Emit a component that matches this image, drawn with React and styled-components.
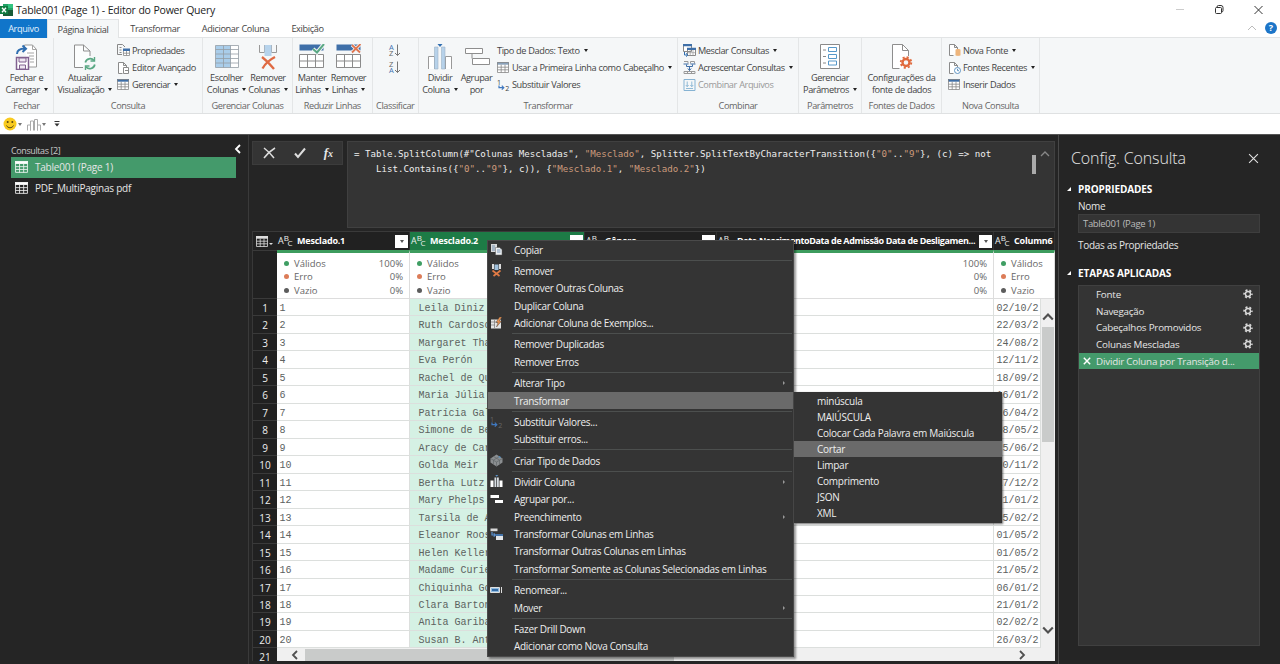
import styled, { createGlobalStyle } from 'styled-components';

const columns = [
    { name: 'Mesclado.1', width: 133 },
    { name: 'Mesclado.2', width: 175, selected: true },
    { name: 'Gênero', width: 132 },
    { name: 'Data NascimentoData de Admissão Data de Desligamen...', width: 277, tight: true },
    { name: 'Column6', width: 61, last: true },
];

const people = [
    ['Leila Diniz', '02/10/2'],
    ['Ruth Cardoso', '22/03/2'],
    ['Margaret Thatcher', '24/08/2'],
    ['Eva Perón', '12/11/2'],
    ['Rachel de Queiroz', '18/09/2'],
    ['Maria Júlia', '16/01/2'],
    ['Patrícia Galvão', '26/04/2'],
    ['Simone de Beauvoir', '08/05/2'],
    ['Aracy de Carvalho', '25/06/2'],
    ['Golda Meir', '30/11/2'],
    ['Bertha Lutz', '17/12/2'],
    ['Mary Phelps', '21/01/2'],
    ['Tarsila de Amaral', '05/02/2'],
    ['Eleanor Roosevelt', '01/05/2'],
    ['Helen Keller', '01/05/2'],
    ['Madame Curie', '21/05/2'],
    ['Chiquinha Gonzaga', '06/01/2'],
    ['Clara Barton', '21/01/2'],
    ['Anita Garibaldi', '02/02/2'],
    ['Susan B. Anthony', '26/03/2'],
];

const steps = ['Fonte', 'Navegação', 'Cabeçalhos Promovidos', 'Colunas Mescladas'];
const transforms = ['minúscula', 'MAIÚSCULA', 'Colocar Cada Palavra em Maiúscula', 'Cortar', 'Limpar', 'Comprimento', 'JSON', 'XML'];

/* ---------- icons ---------- */
const ExcelIcon = () => (
    <svg width="13" height="12" viewBox="0 0 13 12">
        <path d="M3 0h10v12H3z" fill="#21a366" />
        <path d="M8 0h5v4H8z" fill="#33c481" />
        <path d="M3 6h10v6H3z" fill="#185c37" />
        <path d="M0 2h8v8H0z" fill="#107c41" />
        <path d="M2 3.7l4 4.6M6 3.7L2 8.3" stroke="#fff" strokeWidth="1.3" />
    </svg>
);

const CloseLoadIcon = () => (
    <svg width="24" height="26" viewBox="0 0 24 26" fill="none">
        <path d="M9.500 5V1h8l4 4.500V23H14" fill="#fff" stroke="#9a9a9a" />
        <path d="M17.500 1v4.500h4M12 9h7M14 12h5M15 15h4M15 18h4" stroke="#a5a5a5" />
        <path d="M2 10c0-4 3-5.500 8-5.500M7.500 1.500L11 4.700 7.500 8" stroke="#2f6eb0" strokeWidth="2" />
        <path d="M1.500 13.500h12v12h-12z" fill="#fff" stroke="#80608f" strokeWidth="1.500" />
        <path d="M4 14h7v4H4zM4.500 21h6v4h-6z" fill="#eee6f1" stroke="#80608f" />
    </svg>
);

const RefreshIcon = () => (
    <svg width="24" height="26" viewBox="0 0 24 26" fill="none">
        <path d="M1.500 1h9l6.500 6v5L10 23.500H1.500z" fill="#fff" opacity=".7" />
        <path d="M1.500 1h9l6.500 6v5M10 23.500H1.500V1M10.500 1v6H17" stroke="#8e8e8e" />
        <path d="M12.300 18.500a5 5 0 0 1 8.700-2M21.800 20.500a5 5 0 0 1-8.800 2.300" stroke="#5aa884" strokeWidth="1.700" />
        <path d="M21.500 13v4h-4M12.500 26v-4h4" stroke="#5aa884" strokeWidth="1.400" />
    </svg>
);

const ChooseColsIcon = () => (
    <svg width="24" height="26" viewBox="0 0 24 26">
        <path d="M.5 1.500h23v22H.5z" fill="#fff" />
        <path d="M.5 1.500h15v22H.5z" fill="#a9cdea" />
        <path d="M.5 1.500h23v22H.5zM8.500 1.500v22M15.500 1.500v22M.5 5.500h23M.5 10h23M.5 14.500h23M.5 19h23" fill="none" stroke="#949da5" strokeWidth=".8" />
    </svg>
);

const RemoveColsIcon = () => (
    <svg width="22" height="26" viewBox="0 0 22 26" fill="none">
        <path d="M2.500 1v7.500h5V1M14.500 1v7.500h5V1" stroke="#999" />
        <path d="M7.500 1h7v11h-7z" fill="#b6d3ec" />
        <path d="M5 13c4 3 8 7 12 12M18 13C12 16 8 20 5.500 24.500" stroke="#df6a43" strokeWidth="2.300" />
    </svg>
);

const RowsIcon = ({ remove }) => (
    <svg width="26" height="26" viewBox="0 0 26 26" fill="none">
        <path d="M.5.500h24v6H.5z" fill="#3e6fa8" />
        <path d="M.5 10.500h24v13H.5zM.5 17h24M8.500 10.500v13M16.500 10.500v13" fill="#fff" stroke="#8b8b8b" />
        {remove
            ? <path d="M16 1l8 7.500M24.500 0L16 8.500" stroke="#f4f6f7" strokeWidth="3.500" />
            : <path d="M14 5l4 3.500L25 0" stroke="#f4f6f7" strokeWidth="4" />}
        {remove
            ? <path d="M16 1l8 7.500M24.500 0L16 8.500" stroke="#df7550" strokeWidth="1.800" />
            : <path d="M14 5l4 3.500L25 0" stroke="#5aa884" strokeWidth="2" />}
    </svg>
);

const SortIcon = ({ desc }) => (
    <svg width="14" height="14" viewBox="0 0 14 14">
        <text x="1" y="6.500" fontSize="7.500" fontFamily="Open Sans" fill={desc ? '#666' : '#3f73b0'}>{desc ? 'Z' : 'A'}</text>
        <text x="1" y="13" fontSize="7.500" fontFamily="Open Sans" fill={desc ? '#3f73b0' : '#666'}>{desc ? 'A' : 'Z'}</text>
        <path d="M9.500 1.500v11M7 10l2.500 2.500L12 10" fill="none" stroke="#777" />
    </svg>
);

const SplitColIcon = () => (
    <svg width="26" height="26" viewBox="0 0 26 26" fill="none">
        <path d="M1.500 25V12.500h6V25M18.500 25V12.500h6V25" stroke="#999" fill="#fff" />
        <path d="M7.500 3h3.500v22H7.500zM14.500 3H18v22h-3.500z" fill="#b7d2ea" stroke="#9eb4c6" strokeWidth=".6" />
        <path d="M10.500 0h5L13 3z" fill="#2f6eb0" />
    </svg>
);

const GroupByIcon = () => (
    <svg width="26" height="26" viewBox="0 0 26 26" fill="none">
        <path d="M1.500 4.500h17v5h-17zM8.500 14.500h17v6h-17zM8 9.500v5" stroke="#8e8e8e" fill="#fff" />
    </svg>
);

const ParamsIcon = () => (
    <svg width="20" height="26" viewBox="0 0 20 26" fill="none">
        <path d="M.5.500h19v24H.5z" stroke="#8a8a8a" fill="#fff" />
        <path d="M3 6h3M3 12.500h3M3 19h3" stroke="#8a8a8a" />
        <path d="M8.500 3.500h8v4h-8zM8.500 10.500h8v4h-8zM8.500 17h8v4h-8z" stroke="#5698c9" />
    </svg>
);

const SourceGearIcon = () => (
    <svg width="24" height="26" viewBox="0 0 24 26" fill="none">
        <path d="M2.500.500h10l6 6V24.500h-16z" fill="#fff" />
        <path d="M9.500 24.500h-7V.500h10l6 6V12M12.500.500v6h6" stroke="#8e8e8e" />
        <circle cx="16" cy="18.500" r="3.500" fill="#f5f6f7" stroke="#e0693c" strokeWidth="2.400" />
        <circle cx="16" cy="18.500" r="5.300" stroke="#e0693c" strokeWidth="1.800" strokeDasharray="2.100 2.060" />
    </svg>
);

const TableIcon = ({ head = '#3e6fa8', size = 12, line = '#888', fill = '#fff' }) => (
    <svg width={size} height={size * 11 / 12} viewBox="0 0 12 11">
        <path d="M.5.500h11v10H.5z" fill={fill} />
        <path d="M0 0h12v2.700H0z" fill={head} />
        <path d="M.5.500h11v10H.5zM.5 5.200h11M.5 7.800h11M4.200 2.700v8M8 2.700v8" fill="none" stroke={line} strokeWidth=".8" />
    </svg>
);

const PropsIcon = () => (
    <svg width="13" height="12" viewBox="0 0 13 12" fill="none">
        <path d="M5 10.500H.5V.500h5l2.500 2.500M2.500 3.500h2M2.500 6h2M2.500 8.500h2" stroke="#888" />
        <path d="M6 5h7v6.500H6z" fill="#fff" />
        <path d="M6 4.500h7V7H6z" fill="#3e6fa8" />
        <path d="M6.500 7v4.500h6V7M6.500 9.200h6M9.500 7v4.500" stroke="#888" strokeWidth=".8" />
    </svg>
);

const DocIcon = ({ kind }) => (
    <svg width="13" height="12" viewBox="0 0 13 12" fill="none">
        <path d="M5.500 11.500h-4V.500h5l3 3V5M6.500.500v3h3" stroke="#8b8b8b" fill="#fff" />
        {kind === 'edit' && <path d="M6.500 5.500h5v6h-5zM8 8.500h3.500" stroke="#8b8b8b" fill="#fff" />}
        {kind === 'new' && <path d="M7.500 6c0-1.300 5-1.300 5 0v5c0 1.200-5 1.200-5 0z" fill="#eeb57c" />}
        {kind === 'recent' && <><circle cx="9.500" cy="8.500" r="3" stroke="#5f93c2" fill="#fff" /><path d="M9.500 6.800v1.900h1.500" stroke="#5f93c2" /></>}
    </svg>
);

const ReplaceIcon = ({ dark }) => (
    <svg width="13" height="12" viewBox="0 0 13 12" fill="none">
        <text x="0" y="6" fontSize="7" fontFamily="Open Sans" fill={dark ? '#676767' : '#444'}>1</text>
        <text x="8.300" y="11.500" fontSize="7" fontFamily="Open Sans" fill={dark ? '#676767' : '#444'}>2</text>
        <path d="M2 6.500v2.200h4.500M4.800 6.700l2 2-2 2" stroke="#4079c0" strokeWidth="1.200" />
    </svg>
);

const MergeIcon = () => (
    <svg width="13" height="13" viewBox="0 0 13 13" fill="none">
        <path d="M.5.500h8v7h-8zM4.500 4.500h8v7h-8z" fill="#fff" stroke="#888" />
        <path d="M0 0h9v2.200H0zM4 3.800h9V6H4z" fill="#3e6fa8" />
        <path d="M7.200 6v5.500M10 6v5.500M4.500 8.700h8" stroke="#999" strokeWidth=".7" />
        <path d="M1.500 8v3h3M3 9.300L4.800 11 3 12.700" stroke="#2f6eb0" />
    </svg>
);

const AppendIcon = () => (
    <svg width="13" height="13" viewBox="0 0 13 13" fill="none">
        <path d="M1 .500h4v2M7.500 2.500v-2h4v2M1 10.500h11v2H1zM4.500 10.500v2M8.500 10.500v2" stroke="#999" />
        <path d="M.5 3h5M7.500 3h5" stroke="#3e6fa8" />
        <path d="M3.500 3.500v2h6v-2M6.500 5.500v4M4.800 7.500l1.700 2 1.700-2" stroke="#3e6fa8" />
    </svg>
);

const CombineIcon = () => (
    <svg width="13" height="12" viewBox="0 0 13 12" fill="none" stroke="#86b3d3">
        <path d="M1 .500h11v11H1z" />
        <path d="M4.200 2.500v5M2.800 6l1.400 1.700L5.600 6M8.800 2.500v5M7.400 6l1.400 1.700L10.200 6M3 9.500h7" strokeWidth=".9" />
    </svg>
);

const MenuIcon = ({ kind }) => {
    const art = {
        copy: <><path d="M1 1h6v8H1z" fill="#d6d8da" /><path d="M5.500 4.500h4l2.500 2V12H5.500z" fill="#eceff2" stroke="#555" strokeWidth=".5" /><path d="M2 3h3M2 5h3M2 7h3M7 7h3.500M7 9h3.500" stroke="#5d80a5" strokeWidth=".8" /></>,
        remove: <><path d="M2 0h2v5H2zM9 0h2v5H9z" fill="#ddd" /><path d="M4.500.500h4V6h-4z" fill="#9fc0dc" /><path d="M2.500 6.500l7 5.500M10.500 6.500l-7 5.500" stroke="#df7a45" strokeWidth="1.700" /></>,
        example: <><path d="M1 2.500h10v9H1z" fill="#e4e4e4" /><path d="M1 5h10M4.500 3v8M1 8h4" stroke="#777" strokeWidth=".7" /><path d="M9.500 0L6 5.500h2L6.500 10l5-6H9.300L12 0z" fill="#e79252" stroke="#333" strokeWidth=".4" /></>,
        type: <><path d="M6.500.500l6 4v4l-6 4-6-4v-4z" fill="#8b8e90" /><path d="M.5 4.500l6 3.500 6-3.500M6.500 8v4.500M3.500 2.500l6 3.500v4M9.500 2.500l-6 3.500v4" stroke="#62676a" strokeWidth=".7" /><path d="M8 3l2-1 1 2z" fill="#4d90c8" /></>,
        split: <><path d="M.5 5.500h3V12h-3zM9.500 5.500h3V12h-3z" fill="#fff" /><path d="M4.500 2.500h1.800V12H4.500zM7 2.500h1.800V12H7z" fill="#d7dde2" /><path d="M5.300 0h3L6.700 1.700z" fill="#5b91c6" /></>,
        group: <><path d="M.5 2h8.500v3H.5zM5 7h8v3H5z" fill="#fff" /></>,
        unpivot: <><path d="M.5.500h7v2.700h-7z" fill="#d9d9d9" /><path d="M6 7h7v5H6z" fill="#e2e5e8" /><path d="M6 6h7v2H6z" fill="#4473a8" /><path d="M2 4v3h3M3.700 5.300L5.400 7 3.700 8.700" stroke="#5b91d0" strokeWidth="1.200" /></>,
        rename: <><path d="M.5 3.500h9v5h-9z" fill="#8db9df" stroke="#e0e0e0" /><path d="M2 5h6v2H2z" fill="#356ca6" /><path d="M11.500 3v6" stroke="#ddd" /></>,
    };
    if (kind === 'replace') return <ReplaceIcon dark />;
    return <svg width="13" height="13" viewBox="0 0 13 13" fill="none">{art[kind]}</svg>;
};

const Chevron = ({ d, size = 10, color = '#505050', weight = 1.8 }) => (
    <svg width={size} height={size} viewBox="0 0 10 10"><path d={d} fill="none" stroke={color} strokeWidth={weight} /></svg>
);

const Gear = () => (
    <svg width="10" height="10" viewBox="0 0 10 10" fill="none" stroke="#d8d8d8">
        <circle cx="5" cy="5" r="2.500" strokeWidth="1.400" />
        <circle cx="5" cy="5" r="3.900" strokeWidth="1.600" strokeDasharray="2.040 2.040" strokeDashoffset="1.020" />
    </svg>
);

/* ---------- ribbon data ---------- */
const ribbon = [
    { label: 'Fechar', width: 54, big: [{ w: 53, icon: <CloseLoadIcon />, lines: ['Fechar e', 'Carregar'], menu: true }] },
    {
        label: 'Consulta', width: 149,
        big: [{ w: 62, icon: <RefreshIcon />, lines: ['Atualizar', 'Visualização'], menu: true }],
        small: [
            { icon: <PropsIcon />, text: 'Propriedades' },
            { icon: <DocIcon kind="edit" />, text: 'Editor Avançado' },
            { icon: <TableIcon />, text: 'Gerenciar', menu: true },
        ],
        gap: 1,
    },
    {
        label: 'Gerenciar Colunas', width: 90,
        big: [
            { w: 47, icon: <ChooseColsIcon />, lines: ['Escolher', 'Colunas'], menu: true },
            { w: 36, icon: <RemoveColsIcon />, lines: ['Remover', 'Colunas'], menu: true },
        ],
    },
    {
        label: 'Reduzir Linhas', width: 79.5,
        big: [
            { w: 38, icon: <RowsIcon />, lines: ['Manter', 'Linhas'], menu: true },
            { w: 35, icon: <RowsIcon remove />, lines: ['Remover', 'Linhas'], menu: true },
        ],
    },
    { label: 'Classificar', width: 46.5, sort: true },
    {
        label: 'Transformar', width: 259,
        big: [
            { w: 42, icon: <SplitColIcon />, lines: ['Dividir', 'Coluna'], menu: true },
            { w: 31, icon: <GroupByIcon />, lines: ['Agrupar', 'por'] },
        ],
        small: [
            { text: 'Tipo de Dados: Texto', menu: true },
            { icon: <TableIcon head="#8aa2bb" />, text: 'Usar a Primeira Linha como Cabeçalho', menu: true },
            { icon: <ReplaceIcon />, text: 'Substituir Valores' },
        ],
        gap: 5,
    },
    {
        label: 'Combinar', width: 121,
        small: [
            { icon: <MergeIcon />, text: 'Mesclar Consultas', menu: true },
            { icon: <AppendIcon />, text: 'Acrescentar Consultas', menu: true },
            { icon: <CombineIcon />, text: 'Combinar Arquivos', off: true },
        ],
        gap: 5,
    },
    { label: 'Parâmetros', width: 63, big: [{ w: 62, icon: <ParamsIcon />, lines: ['Gerenciar', 'Parâmetros'], menu: true }] },
    { label: 'Fontes de Dados', width: 80, big: [{ w: 79, icon: <SourceGearIcon />, lines: ['Configurações da', 'fonte de dados'] }] },
    {
        label: 'Nova Consulta', width: 98,
        small: [
            { icon: <DocIcon kind="new" />, text: 'Nova Fonte', menu: true },
            { icon: <DocIcon kind="recent" />, text: 'Fontes Recentes', menu: true },
            { icon: <TableIcon />, text: 'Inserir Dados' },
        ],
        gap: 6,
    },
];

const menuGroups = [
    [{ text: 'Copiar', icon: 'copy' }],
    [
        { text: 'Remover', icon: 'remove' },
        { text: 'Remover Outras Colunas' },
        { text: 'Duplicar Coluna' },
        { text: 'Adicionar Coluna de Exemplos...', icon: 'example' },
    ],
    [{ text: 'Remover Duplicadas' }, { text: 'Remover Erros' }],
    [{ text: 'Alterar Tipo', sub: true }, { text: 'Transformar', active: true }],
    [{ text: 'Substituir Valores...', icon: 'replace' }, { text: 'Substituir erros...' }],
    [{ text: 'Criar Tipo de Dados', icon: 'type' }],
    [
        { text: 'Dividir Coluna', icon: 'split', sub: true },
        { text: 'Agrupar por...', icon: 'group' },
        { text: 'Preenchimento', sub: true },
        { text: 'Transformar Colunas em Linhas', icon: 'unpivot' },
        { text: 'Transformar Outras Colunas em Linhas' },
        { text: 'Transformar Somente as Colunas Selecionadas em Linhas' },
    ],
    [{ text: 'Renomear...', icon: 'rename' }, { text: 'Mover', sub: true }],
    [{ text: 'Fazer Drill Down' }, { text: 'Adicionar como Nova Consulta' }],
];

const Ribbon = () => (
    <RibbonBar>
        {ribbon.map((group) => (
            <Group key={group.label} $w={group.width}>
                <div className="body">
                    {group.big?.map((item) => (
                        <BigButton key={item.lines.join()} $w={item.w}>
                            <span className="icon">{item.icon}</span>
                            <span>{item.lines[0]}</span>
                            <span>{item.lines[1]}{item.menu && <Caret />}</span>
                        </BigButton>
                    ))}
                    {group.small && (
                        <SmallList $gap={group.gap}>
                            {group.small.map((item) => (
                                <SmallButton key={item.text} $off={item.off}>
                                    {item.icon && <span className="icon">{item.icon}</span>}
                                    {item.text}{item.menu && <Caret />}
                                </SmallButton>
                            ))}
                        </SmallList>
                    )}
                    {group.sort && <SortList><SortIcon /><SortIcon desc /></SortList>}
                </div>
                <footer>{group.label}</footer>
            </Group>
        ))}
    </RibbonBar>
);

const TypeBadge = () => <Abc><span>A</span><sup>B</sup><sub>C</sub></Abc>;

const Grid = () => (
    <GridWrap>
        <HeaderRow>
            <Corner><TableIcon head="#ddd" line="#ddd" fill="none" /><i /></Corner>
            {columns.map((col) => (
                <HeadCell key={col.name} $w={col.width} $selected={col.selected} $tight={col.tight}>
                    <TypeBadge />
                    <b>{col.name}</b>
                    {!col.last && <Drop><Caret $color="#555" /></Drop>}
                </HeadCell>
            ))}
        </HeaderRow>
        <QualityRow>
            <RowNo />
            {columns.map((col) => (
                <Quality key={col.name} $w={col.width}>
                    <p><Dot $color="#3f9e63" />Válidos{!col.last && <em>100%</em>}</p>
                    <p><Dot $color="#dc7c58" />Erro{!col.last && <em>0%</em>}</p>
                    <p><Dot $color="#5c5c5c" />Vazio{!col.last && <em>0%</em>}</p>
                </Quality>
            ))}
        </QualityRow>
        <Body>
            <div className="numbers">
                {people.map((p, i) => <RowNo key={i}>{i + 1}</RowNo>)}
                <RowNo>21</RowNo>
            </div>
            <div className="scroller">
                <div className="data">
                    <div className="rows">
                        {people.map(([name, date], i) => (
                            <Row key={name}>
                                <Cell $w={133}>{i + 1}</Cell>
                                <Cell $w={175} $selected>{name}</Cell>
                                <Cell $w={132} />
                                <Cell $w={277} />
                                <Cell $w={47}>{date}</Cell>
                            </Row>
                        ))}
                    </div>
                    <VScroll>
                        <Chevron d="M1 7l4-4 4 4" size={12} />
                        <i />
                        <Chevron d="M1 3l4 4 4-4" size={12} />
                    </VScroll>
                </div>
                <HScroll>
                    <Chevron d="M7 1L3 5l4 4" />
                    <i />
                    <Chevron d="M3 1l4 4-4 4" />
                </HScroll>
            </div>
        </Body>
    </GridWrap>
);

const ContextMenu = () => (
    <Menu>
        {menuGroups.map((items, i) => (
            <MenuGroup key={i}>
                {items.map((item) => (
                    <MenuItem key={item.text} $active={item.active}>
                        <span className="icon">{item.icon && <MenuIcon kind={item.icon} />}</span>
                        {item.text}
                        {item.sub && <i />}
                    </MenuItem>
                ))}
            </MenuGroup>
        ))}
    </Menu>
);

const App = () => (
    <>
        <GlobalStyle />
        <Window>
            <TitleBar>
                <ExcelIcon />
                <h1>Table001 (Page 1) - Editor do Power Query</h1>
                <div className="controls">
                    <svg width="100" height="12" viewBox="0 0 100 12" fill="none" stroke="#333">
                        <path d="M6 5.500h8" stroke="#ccc" />
                        <path d="M47 3.500V3a1.500 1.500 0 0 1 1.500-1.500H51A2 2 0 0 1 53 3.500V6.500A1.500 1.500 0 0 1 51.500 8" />
                        <rect x="45.500" y="3.500" width="6" height="6" rx="1" />
                        <path d="M84.500 2l8 8M92.500 2l-8 8" />
                    </svg>
                </div>
            </TitleBar>
            <Tabs>
                <Tab $w={47} $file>Arquivo</Tab>
                <Tab $w={72} $active>Página Inicial</Tab>
                <Tab $w={72}>Transformar</Tab>
                <Tab $w={89}>Adicionar Coluna</Tab>
                <Tab $w={55}>Exibição</Tab>
                <div className="help">
                    <Chevron d="M1 7l4-4 4 4" color="#bbb" weight={1} />
                    <Help>?</Help>
                </div>
            </Tabs>
            <Ribbon />
            <QuickBar>
                <svg width="14" height="14" viewBox="0 0 14 14">
                    <circle cx="7" cy="7" r="6.500" fill="#f9cb20" />
                    <path d="M3.500 8.500c1.500 3 5.500 3 7 0" fill="none" stroke="#5d4a10" />
                    <circle cx="4.700" cy="5" r="1" fill="#5d4a10" /><circle cx="9.300" cy="5" r="1" fill="#5d4a10" />
                </svg>
                <Caret $color="#777" />
                <svg width="14" height="13" viewBox="0 0 14 13" fill="#fff" stroke="#aaa">
                    <path d="M.5 12.500V7h3v5.500M3.500 12.500V3h3v9.500M7.500 12.500V1.500h3v11M10.500 12.500V7h3v5.500" />
                </svg>
                <Caret $color="#777" />
                <svg className="more" width="6" height="6" viewBox="0 0 6 6"><path d="M.5.500h5" stroke="#333" /><path d="M.5 2.500h5L3 5.500z" fill="#333" /></svg>
            </QuickBar>
            <Main>
                <Queries>
                    <header>Consultas [2]<Chevron d="M7 1L3 5l4 4" color="#fff" /></header>
                    <Query $active><TableIcon head="#fff" line="#eef5f1" fill="none" size={13} />Table001 (Page 1)</Query>
                    <Query><TableIcon head="#fff" line="#eee" fill="none" size={13} />PDF_MultiPaginas pdf</Query>
                </Queries>
                <Center>
                    <FormulaRow>
                        <FormulaActions>
                            <svg width="13" height="12" viewBox="0 0 13 12"><path d="M1 1c4 3 7 6 10 10M12 1C7 4 4 7 1 11" fill="none" stroke="#ddd" strokeWidth="1.500" /></svg>
                            <svg width="12" height="12" viewBox="0 0 12 12"><path d="M1 6.500l3 3.500L11 1.500" fill="none" stroke="#ddd" strokeWidth="2" /></svg>
                            <em>f<small>x</small></em>
                        </FormulaActions>
                        <Formula>
                            <code>
                                = Table.SplitColumn(#"Colunas Mescladas", <s>"Mesclado"</s>, Splitter.SplitTextByCharacterTransition({'{'}<s>"0"</s>..<s>"9"</s>{'}'}, (c) =&gt; not
                                <br />
                                <span>List.Contains({'{'}<s>"0"</s>..<s>"9"</s>{'}'}, c)), {'{'}<s>"Mesclado.1"</s>, <s>"Mesclado.2"</s>{'}'})</span>
                            </code>
                            <i />
                            <Chevron d="M1 7l4-4 4 4" color="#888" weight={1.3} />
                        </Formula>
                    </FormulaRow>
                    <Grid />
                </Center>
                <Settings>
                    <header><h2>Config. Consulta</h2><Chevron d="M1 1l8 8M9 1L1 9" size={11} color="#e0e0e0" weight={1} /></header>
                    <Section>PROPRIEDADES</Section>
                    <label>Nome</label>
                    <NameField>Table001 (Page 1)</NameField>
                    <label>Todas as Propriedades</label>
                    <Section $gap={12}>ETAPAS APLICADAS</Section>
                    <Steps>
                        {steps.map((step) => <Step key={step}>{step}<Gear /></Step>)}
                        <Step $active>
                            <Chevron d="M1 1l8 8M9 1L1 9" size={8} color="#fff" />
                            Dividir Coluna por Transição d...
                        </Step>
                    </Steps>
                </Settings>
            </Main>
            <ContextMenu />
            <SubMenu>
                {transforms.map((name) => <SubItem key={name} $active={name === 'Cortar'}>{name}</SubItem>)}
            </SubMenu>
        </Window>
    </>
);

const GlobalStyle = createGlobalStyle`
    *{
        box-sizing: border-box;
        margin: 0;
        padding: 0;
    }
    body{
        font-family: 'Open Sans', 'Noto Sans', sans-serif;
        overflow: hidden;
    }
    svg{
        display: block;
        flex: none;
    }
`

const Window = styled.div`
    position: relative;
    width: 1280px;
    height: 664px;
    display: flex;
    flex-direction: column;
    overflow: hidden;
    background: #fff;
    white-space: nowrap;
`

const Caret = styled.i`
    display: inline-block;
    flex: none;
    margin-left: 4px;
    vertical-align: 2px;
    border: 2.5px solid transparent;
    border-top: 3px solid ${({ $color }) => $color || '#222'};
    border-bottom: 0;
`

const TitleBar = styled.header`
    height: 19px;
    display: flex;
    align-items: center;
    h1{
        margin-left: 3px;
        font-size: 10.5px;
        font-weight: 400;
        letter-spacing: -0.5px;
        word-spacing: 0.3px;
        letter-spacing: -0.22px;
        color: #222;
    }
    .controls{
        margin-left: auto;
        margin-right: 10px;
    }
`

const Tabs = styled.nav`
    height: 19px;
    display: flex;
    border-bottom: 1px solid #e2e4e5;
    .help{
        display: flex;
        align-items: center;
        gap: 8px;
        margin-left: auto;
        margin-right: 3px;
    }
`

const Tab = styled.div`
    width: ${({ $w }) => $w}px;
    height: 19px;
    line-height: 19px;
    text-align: center;
    font-size: 9.2px;
    letter-spacing: -0.37px;
    word-spacing: 0.4px;
    color: ${({ $file }) => ($file ? '#e4f1fc' : '#444')};
    background: ${({ $file, $active }) => ($file ? '#1075ca' : $active ? '#f5f7f8' : 'transparent')};
    border: solid #e2e4e5;
    border-width: ${({ $active }) => ($active ? '1px 1px 0' : '0')};
`

const Help = styled.span`
    width: 12px;
    height: 12px;
    line-height: 12px;
    border-radius: 50%;
    background: #1c75c8;
    color: #fff;
    font-size: 9px;
    font-weight: 700;
    text-align: center;
`

const RibbonBar = styled.div`
    height: 76px;
    display: flex;
    background: #f5f7f8;
    border-bottom: 1px solid #dfe1e2;
    color: #444;
    font-size: 9.2px;
    letter-spacing: -0.42px;
    word-spacing: 0.3px;
`

const Group = styled.section`
    width: ${({ $w }) => $w}px;
    flex: none;
    border-right: 1px solid #e4e6e7;
    .body{
        height: 61px;
        display: flex;
    }
    footer{
        line-height: 14px;
        text-align: center;
        color: #666;
    }
`

const BigButton = styled.div`
    width: ${({ $w }) => $w}px;
    flex: none;
    display: flex;
    flex-direction: column;
    align-items: center;
    line-height: 11.5px;
    .icon{
        margin: 6px 0 2px;
        height: 26px;
    }
`

const SmallList = styled.div`
    padding-top: 3.5px;
    margin-left: ${({ $gap }) => $gap}px;
`

const SmallButton = styled.div`
    height: 17.4px;
    display: flex;
    align-items: center;
    color: ${({ $off }) => ($off ? '#999' : '#444')};
    .icon{
        width: 15px;
    }
`

const SortList = styled.div`
    display: grid;
    gap: 3px;
    align-content: start;
    margin: 5px auto 0;
`

const QuickBar = styled.div`
    height: 20px;
    display: flex;
    align-items: center;
    padding-left: 3px;
    ${Caret}{
        margin: 0 5px 0 1px;
    }
    .more{
        margin-left: 3px;
    }
`

const Main = styled.main`
    height: 530px;
    display: flex;
    background: #252525;
    border-top: 1px solid #555;
    color: #e6e6e6;
`

const Queries = styled.aside`
    width: 249px;
    flex: none;
    padding: 7px 12px 0 11px;
    border-right: 1px solid #3a3a3a;
    header{
        height: 15px;
        margin-right: -8px;
        display: flex;
        align-items: flex-start;
        justify-content: space-between;
        padding-right: 1px;
        line-height: 18px;
        font-size: 9px;
        letter-spacing: -0.4px;
        color: #c9c9c9;
        svg{
            margin-top: 2px;
        }
    }
`

const Query = styled.div`
    height: 20.5px;
    display: flex;
    align-items: center;
    gap: 7px;
    padding-left: 4px;
    font-size: 10px;
    letter-spacing: -0.23px;
    background: ${({ $active }) => ($active ? '#449a6b' : 'transparent')};
`

const Center = styled.section`
    width: 809px;
    flex: none;
    padding: 6px 3px 0;
`

const FormulaRow = styled.div`
    height: 88px;
    display: flex;
    align-items: flex-start;
    gap: 4px;
`

const FormulaActions = styled.div`
    width: 91px;
    height: 24px;
    display: flex;
    align-items: center;
    justify-content: space-between;
    padding: 0 9px 0 10px;
    background: #343434;
    border: 1px solid #3c3c3c;
    em{
        font: italic 700 13px/20px 'Liberation Serif', serif;
    }
    small{
        font-size: 10px;
    }
`

const Formula = styled.div`
    flex: 1;
    height: 87px;
    display: flex;
    padding: 5px 4px 0 6px;
    background: #343434;
    border: 1px solid #404040;
    code{
        flex: 1;
        font: 9.13px/14.5px 'DejaVu Sans Mono', monospace;
        color: #eee;
    }
    span{
        padding-left: 22px;
    }
    s{
        color: #cc9a7c;
        text-decoration: none;
    }
    i{
        width: 4px;
        height: 19px;
        margin: 8px 4px 0 0;
        background: #aaa;
    }
    svg{
        margin-top: 2px;
    }
`

const GridWrap = styled.div`
    height: 430px;
    margin-top: 2px;
    overflow: hidden;
    border-left: 1px solid #383838;
    background: #212121;
`

const HeaderRow = styled.div`
    height: 19px;
    display: flex;
    border-top: 1px solid #3a3a3a;
`

const Corner = styled.div`
    width: 24px;
    flex: none;
    display: flex;
    align-items: center;
    padding-left: 3px;
    i{
        margin: 7px 0 0 1px;
        border: 2px solid transparent;
        border-top-color: #ddd;
    }
`

const HeadCell = styled.div`
    width: ${({ $w }) => $w}px;
    flex: none;
    display: flex;
    align-items: center;
    padding: 0 1px;
    overflow: hidden;
    background: ${({ $selected }) => ($selected ? '#1d7b46' : 'transparent')};
    border-right: 1px solid #303030;
    b{
        flex: 1;
        min-width: 0;
        margin-top: -2px;
        font-size: 9px;
        font-weight: 700;
        letter-spacing: ${({ $tight }) => ($tight ? -0.38 : -0.2)}px;
        color: #fff;
    }
`

const Abc = styled.span`
    width: 19px;
    flex: none;
    display: flex;
    align-items: center;
    font-size: 9px;
    line-height: 8px;
    color: #eee;
    sup{
        font-size: 8px;
        margin-bottom: 6px;
    }
    sub{
        font-size: 8px;
        margin: 4px 0 0 -1.5px;
    }
`

const Drop = styled.span`
    width: 13px;
    height: 13px;
    flex: none;
    display: grid;
    place-items: center;
    background: #fff;
    ${Caret}{
        margin: 0;
    }
`

const QualityRow = styled.div`
    height: 49px;
    display: flex;
`

const Quality = styled.div`
    width: ${({ $w }) => $w}px;
    flex: none;
    padding: 4px 6px 0 7px;
    background: #fff;
    border: solid #ddd;
    border-width: 0 1px 1px 0;
    border-top: 3px solid #3d9c5e;
    font-size: 9.5px;
    color: #666;
    p{
        height: 13.3px;
        display: flex;
        align-items: center;
    }
    em{
        font-style: normal;
        margin-left: auto;
    }
`

const Dot = styled.i`
    width: 5px;
    height: 5px;
    margin-right: 5px;
    border-radius: 50%;
    background: ${({ $color }) => $color};
`

const RowNo = styled.div`
    width: 24px;
    height: 17.47px;
    flex: none;
    padding-top: 1px;
    line-height: 17px;
    text-align: center;
    font-size: 10px;
    color: #eee;
    border-bottom: 1px solid #3a3a3a;
    ${QualityRow} &{
        height: 49px;
        border-top: 1px solid #3a3a3a;
    }
`

const Body = styled.div`
    height: 362px;
    display: flex;
    overflow: hidden;
    .numbers{
        width: 24px;
        flex: none;
    }
    .data{
        height: 349px;
        display: flex;
        overflow: hidden;
        background: #fff;
    }
    .rows{
        width: 764px;
        flex: none;
    }
`

const Row = styled.div`
    height: 17.47px;
    display: flex;
`

const Cell = styled.div`
    width: ${({ $w }) => $w}px;
    flex: none;
    padding-left: ${({ $selected }) => ($selected ? 8.5 : 2.5)}px;
    line-height: 19.5px;
    overflow: hidden;
    font-family: 'Liberation Mono', monospace;
    font-size: 10px;
    color: #5c625f;
    background: ${({ $selected }) => ($selected ? '#d5f1e4' : '#fff')};
    border: solid #dcdfdd;
    border-width: 0 1px 1px 0;
`

const VScroll = styled.div`
    width: 14px;
    display: flex;
    flex-direction: column;
    align-items: center;
    padding: 12px 0 12px;
    background: #f0f0f0;
    i{
        width: 12px;
        height: 115px;
        margin: 4px 0 auto;
        background: #c9cbca;
    }
`

const HScroll = styled.div`
    height: 13px;
    display: flex;
    align-items: center;
    padding: 0 28px 0 13px;
    background: #f0f0f0;
    i{
        width: 369px;
        height: 12px;
        margin: 0 auto 0 5px;
        background: #c9cbca;
    }
`

const Settings = styled.aside`
    flex: 1;
    padding: 0 20px 0 19px;
    border-left: 1px solid #484848;
    header{
        height: 46px;
        display: flex;
        align-items: center;
        justify-content: space-between;
        margin: 0 1px 0 -7px;
    }
    h2{
        font-size: 16px;
        font-weight: 300;
        letter-spacing: -0.1px;
    }
    label{
        display: block;
        font-size: 10px;
        line-height: 16px;
        letter-spacing: -0.28px;
    }
`

const Section = styled.h3`
    position: relative;
    margin-top: ${({ $gap = 0 }) => $gap}px;
    line-height: 17px;
    font-size: 10px;
    font-weight: 700;
    letter-spacing: -0.1px;
    color: #fff;
    &::before{
        content: '';
        position: absolute;
        left: -11px;
        top: 6px;
        border-left: 4px solid transparent;
        border-bottom: 4px solid #fff;
    }
`

const NameField = styled.div`
    height: 19px;
    margin-bottom: 4px;
    padding-left: 4px;
    line-height: 18px;
    font-size: 9.5px;
    letter-spacing: -0.35px;
    color: #bbb;
    background: #343434;
    border: 1px solid #3e3e3e;
`

const Steps = styled.div`
    height: 361px;
    margin-top: 3px;
    background: #343434;
    border: 1px solid #404040;
`

const Step = styled.div`
    height: 16.7px;
    display: flex;
    align-items: center;
    justify-content: ${({ $active }) => ($active ? 'flex-start' : 'space-between')};
    gap: 5px;
    padding: ${({ $active }) => ($active ? '0 0 0 4px' : '0 6px 0 17px')};
    font-size: 9.8px;
    letter-spacing: -0.2px;
    background: ${({ $active }) => ($active ? '#449a6b' : 'transparent')};
`

const Menu = styled.div`
    position: absolute;
    left: 487px;
    top: 240px;
    width: 307px;
    height: 417px;
    background: #343434;
    border: 1px solid #4a4a4a;
    box-shadow: 2px 2px 2px rgba(0, 0, 0, 0.4);
    color: #eee;
    font-size: 10px;
    letter-spacing: -0.32px;
`

const MenuGroup = styled.div`
    & + &::before{
        content: '';
        display: block;
        height: 1px;
        margin: 1.45px 1px 1.45px 24px;
        background: #4c4f4e;
    }
`

const MenuItem = styled.div`
    height: 17.41px;
    display: flex;
    align-items: center;
    padding-left: 2px;
    background: ${({ $active }) => ($active ? '#6a6a6a' : 'transparent')};
    .icon{
        width: 24px;
        flex: none;
    }
    i{
        margin: 0 8px 0 auto;
        border: 2.5px solid transparent;
        border-left-color: #999;
        border-right: 0;
    }
`

const SubMenu = styled.div`
    position: absolute;
    left: 794px;
    top: 392px;
    width: 208px;
    height: 131px;
    padding-top: 1px;
    background: #343434;
    box-shadow: 1px 1px 2px rgba(0, 0, 0, 0.6);
    color: #eee;
    font-size: 10px;
    letter-spacing: -0.25px;
`

const SubItem = styled.div`
    height: 16px;
    padding-left: 23px;
    line-height: 16px;
    background: ${({ $active }) => ($active ? '#6a6a6a' : 'transparent')};
`

export default App
